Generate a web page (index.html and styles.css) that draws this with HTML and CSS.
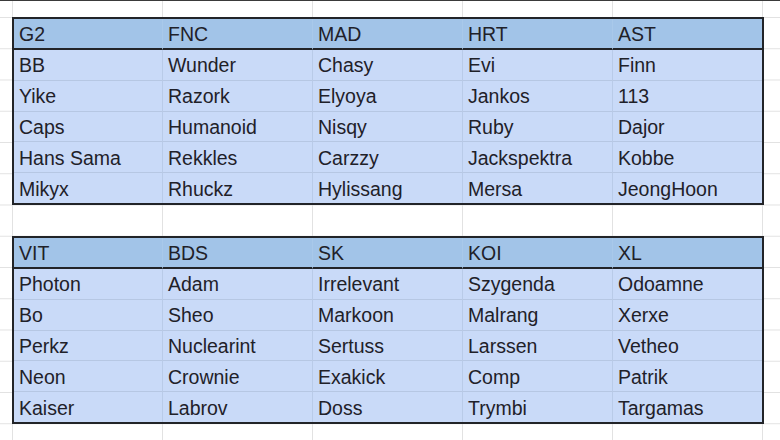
FILE: index.html
```html
<!DOCTYPE html>
<html>
<head>
<meta charset="utf-8">
<link rel="stylesheet" href="styles.css">
</head>
<body>
<div class="sheet">
  <div class="team-table">
    <div class="cell head">G2</div><div class="cell head">FNC</div><div class="cell head">MAD</div><div class="cell head">HRT</div><div class="cell head">AST</div>
    <div class="cell">BB</div><div class="cell">Wunder</div><div class="cell">Chasy</div><div class="cell">Evi</div><div class="cell">Finn</div>
    <div class="cell">Yike</div><div class="cell">Razork</div><div class="cell">Elyoya</div><div class="cell">Jankos</div><div class="cell">113</div>
    <div class="cell">Caps</div><div class="cell">Humanoid</div><div class="cell">Nisqy</div><div class="cell">Ruby</div><div class="cell">Dajor</div>
    <div class="cell">Hans Sama</div><div class="cell">Rekkles</div><div class="cell">Carzzy</div><div class="cell">Jackspektra</div><div class="cell">Kobbe</div>
    <div class="cell">Mikyx</div><div class="cell">Rhuckz</div><div class="cell">Hylissang</div><div class="cell">Mersa</div><div class="cell">JeongHoon</div>
  </div>
  <div class="team-table">
    <div class="cell head">VIT</div><div class="cell head">BDS</div><div class="cell head">SK</div><div class="cell head">KOI</div><div class="cell head">XL</div>
    <div class="cell">Photon</div><div class="cell">Adam</div><div class="cell">Irrelevant</div><div class="cell">Szygenda</div><div class="cell">Odoamne</div>
    <div class="cell">Bo</div><div class="cell">Sheo</div><div class="cell">Markoon</div><div class="cell">Malrang</div><div class="cell">Xerxe</div>
    <div class="cell">Perkz</div><div class="cell">Nuclearint</div><div class="cell">Sertuss</div><div class="cell">Larssen</div><div class="cell">Vetheo</div>
    <div class="cell">Neon</div><div class="cell">Crownie</div><div class="cell">Exakick</div><div class="cell">Comp</div><div class="cell">Patrik</div>
    <div class="cell">Kaiser</div><div class="cell">Labrov</div><div class="cell">Doss</div><div class="cell">Trymbi</div><div class="cell">Targamas</div>
  </div>
</div>
</body>
</html>
```
FILE: styles.css
```css
html, body {
  margin: 0;
  padding: 0;
  background: #ffffff;
  overflow: hidden;
}

.sheet {
  box-sizing: border-box;
  width: 780px;
  height: 440px;
  border-top: 1px solid #3a3a3a;
  padding: 16px 0 0 12px;
  display: flex;
  flex-direction: column;
  gap: 31px;
  background-color: #ffffff;
  background-image:
    linear-gradient(to bottom, #e2e2e2 1px, transparent 1px),
    linear-gradient(to right, #e2e2e2 1px, transparent 1px);
  background-size: 100% 31.25px, 150px 100%;
  background-position: 0 16px, 12px 0;
  font-family: "Liberation Sans", Arial, sans-serif;
}

.team-table {
  box-sizing: border-box;
  width: 752px;
  height: 188px;
  border: 2px solid #222428;
  display: grid;
  grid-template-columns: 149px 150px 150px 150px 149px;
  grid-template-rows: 31px 29.8px repeat(4, 30.8px);
  background: #c9daf8;
}

.cell {
  box-sizing: border-box;
  padding: 2px 0 0 5px;
  font-size: 19.5px;
  line-height: 29px;
  color: #1f2129;
  white-space: nowrap;
  border-right: 1px solid #b9cbe8;
  border-top: 1px solid #b6c7e3;
  display: flex;
  align-items: center;
}

.cell:nth-child(5n) {
  border-right: none;
}

.cell.head {
  background: #a2c4e8;
  border-top: none;
  border-bottom: 2px solid #222428;
  border-right-color: #a9c9ea;
}

.team-table .cell:nth-child(-n+10) {
  border-top: none;
}
```
